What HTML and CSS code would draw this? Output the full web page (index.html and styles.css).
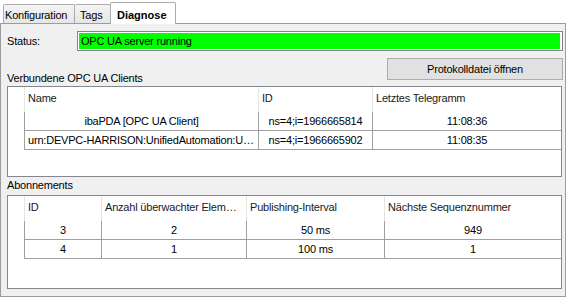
FILE: index.html
```html
<!DOCTYPE html>
<html lang="de">
<head>
    <meta charset="UTF-8">
    <title>Diagnose</title>
    <link rel="stylesheet" href="styles.css">
</head>
<body>

<div class="window">
    <div class="tabs">
        <div class="tab tab-konfig">Konfiguration</div>
        <div class="tab tab-tags">Tags</div>
        <div class="tab tab-active">Diagnose</div>
    </div>

    <div class="panel">
        <div class="status-row">
            <span class="status-label">Status:</span>
            <div class="status-field">
                <div class="status-value">OPC UA server running</div>
            </div>
        </div>

        <div class="clients-row">
            <span class="group-label">Verbundene OPC UA Clients</span>
            <button class="log-btn">Protokolldatei öffnen</button>
        </div>

        <div class="list clients">
            <div class="row head">
                <div class="cell"></div>
                <div class="cell">Name</div>
                <div class="cell">ID</div>
                <div class="cell">Letztes Telegramm</div>
            </div>
            <div class="row data">
                <div class="cell"></div>
                <div class="cell">ibaPDA [OPC UA Client]</div>
                <div class="cell">ns=4;i=1966665814</div>
                <div class="cell">11:08:36</div>
            </div>
            <div class="row data">
                <div class="cell"></div>
                <div class="cell left">urn:DEVPC-HARRISON:UnifiedAutomation:U…</div>
                <div class="cell">ns=4;i=1966665902</div>
                <div class="cell">11:08:35</div>
            </div>
        </div>

        <div class="group-label sub-label">Abonnements</div>

        <div class="list subs">
            <div class="row head">
                <div class="cell"></div>
                <div class="cell">ID</div>
                <div class="cell">Anzahl überwachter Elem…</div>
                <div class="cell">Publishing-Interval</div>
                <div class="cell">Nächste Sequenznummer</div>
            </div>
            <div class="row data">
                <div class="cell"></div>
                <div class="cell">3</div>
                <div class="cell">2</div>
                <div class="cell">50 ms</div>
                <div class="cell">949</div>
            </div>
            <div class="row data">
                <div class="cell"></div>
                <div class="cell">4</div>
                <div class="cell">1</div>
                <div class="cell">100 ms</div>
                <div class="cell">1</div>
            </div>
        </div>
    </div>
</div>

</body>
</html>
```

FILE: styles.css
```css
body {
    margin: 0;
    background: #fff;
    font-family: "Liberation Sans", Arial, sans-serif;
    font-size: 11px;
    letter-spacing: -0.2px;
    color: #000;
}

.window {
    width: 566px;
}

/* tab strip */
.tabs {
    display: flex;
    align-items: flex-end;
    height: 23px;
    padding-left: 3px;
}

.tab {
    box-sizing: border-box;
    height: 19px;
    padding-top: 4px;
    line-height: 13px;
    white-space: nowrap;
    border: 1px solid #acacac;
    border-bottom: none;
    border-radius: 2px 2px 0 0;
    background: linear-gradient(#f4f4f4, #e6e6e6);
}

.tab-konfig {
    width: 72px;
    padding-left: 1px;
}

.tab-tags {
    width: 36px;
    border-left: none;
    padding-left: 5px;
}

.tab-active {
    position: relative;
    z-index: 1;
    width: 66px;
    height: 22px;
    margin-left: -1px;
    margin-bottom: -1px;
    padding-top: 6px;
    padding-left: 6px;
    background: #fff;
    font-weight: bold;
    letter-spacing: 0;
}

/* tab page */
.panel {
    box-sizing: border-box;
    height: 274px;
    border: 1px solid #9c9c9c;
    background: #f0f0f0;
    padding: 0 3px 0 6px;
}

.status-row {
    display: flex;
    align-items: center;
    height: 20px;
    margin-top: 7px;
    margin-right: -1px;
}

.status-label {
    flex: 0 0 70px;
    line-height: 13px;
}

.status-field {
    box-sizing: border-box;
    flex: 1;
    height: 20px;
    border: 1px solid #838383;
    padding: 1px 2px 1px 1px;
    background: #fff;
}

.status-value {
    height: 100%;
    padding-left: 2px;
    line-height: 16px;
    background: #00ff00;
}

.clients-row {
    display: flex;
    justify-content: space-between;
    height: 28px;
    margin-top: 7px;
    margin-right: -1px;
}

.group-label {
    line-height: 13px;
}

.clients-row .group-label {
    align-self: flex-end;
    margin-bottom: 1px;
}

.sub-label {
    margin-top: 2px;
    margin-bottom: 3px;
}

.log-btn {
    align-self: flex-start;
    box-sizing: border-box;
    width: 176px;
    height: 22px;
    margin: 0;
    padding: 0;
    border: 1px solid #adadad;
    background: #e1e1e1;
    font: inherit;
    letter-spacing: inherit;
    color: #000;
}

/* list views */
.list {
    box-sizing: border-box;
    border: 1px solid #828790;
    background: #fff;
    overflow: hidden;
}

.clients {
    height: 91px;
}

.subs {
    height: 94px;
}

.row {
    display: grid;
}

.clients .row {
    grid-template-columns: 17px 234px 114px 188px;
}

.subs .row {
    grid-template-columns: 17px 77px 145px 138px 176px;
}

.cell {
    box-sizing: border-box;
    overflow: hidden;
    white-space: nowrap;
}

.head {
    height: 25px;
}

.head .cell {
    padding-left: 3px;
    line-height: 23px;
    color: #1a1a1a;
    border-right: 1px solid #e5e5e5;
}

.head .cell:last-child {
    border-right: none;
}

.data {
    height: 19px;
}

.data .cell {
    line-height: 18px;
    text-align: center;
    border-right: 1px solid #a0a0a0;
    border-bottom: 1px solid #a0a0a0;
}

.data .cell:first-child {
    border-bottom: none;
}

.data .cell:last-child {
    border-right: none;
}

.data .cell.left {
    text-align: left;
    padding-left: 3px;
}
```
